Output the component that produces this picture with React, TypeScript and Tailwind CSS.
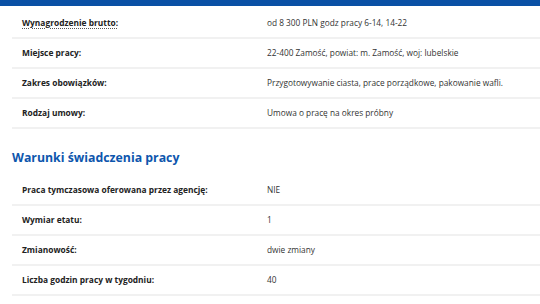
import React from "react";

const rows1: [string, string, boolean?][] = [
  ["Wynagrodzenie brutto:", "od 8 300 PLN godz pracy 6-14, 14-22", true],
  ["Miejsce pracy:", "22-400 Zamość, powiat: m. Zamość, woj: lubelskie"],
  ["Zakres obowiązków:", "Przygotowywanie ciasta, prace porządkowe, pakowanie wafli."],
  ["Rodzaj umowy:", "Umowa o pracę na okres próbny"],
];

const rows2: [string, string][] = [
  ["Praca tymczasowa oferowana przez agencję:", "NIE"],
  ["Wymiar etatu:", "1"],
  ["Zmianowość:", "dwie zmiany"],
  ["Liczba godzin pracy w tygodniu:", "40"],
];

function Row({ label, value, abbr }: { label: string; value: string; abbr?: boolean }) {
  return (
    <div className="flex h-[30px] items-center border-b-2 border-[#f1f1f1]">
      <div className="w-[255px] shrink-0 pl-[10px] text-[8.4px] font-bold text-[#222]">
        {abbr ? (
          <span className="underline decoration-dotted decoration-[#555] underline-offset-2">{label}</span>
        ) : (
          label
        )}
      </div>
      <div className="text-[8.3px] text-[#333]">{value}</div>
    </div>
  );
}

export default function App() {
  return (
    <div className="h-[304px] w-[540px] overflow-hidden bg-white" style={{ fontFamily: '"Open Sans", "Noto Sans", sans-serif' }}>
      <div className="h-[6px] bg-[#0a50a5]" />
      <div className="ml-[12px] pt-[3px]">
        {rows1.map(([l, v, a]) => (
          <Row key={l} label={l} value={v} abbr={a} />
        ))}
      </div>
      <h2 className="ml-[12px] mt-[19px] h-[20px] text-[12.3px] font-bold leading-[20px] text-[#0d56ad]">
        Warunki świadczenia pracy
      </h2>
      <div className="ml-[12px] mt-[8px]">
        {rows2.map(([l, v]) => (
          <Row key={l} label={l} value={v} />
        ))}
      </div>
    </div>
  );
}
